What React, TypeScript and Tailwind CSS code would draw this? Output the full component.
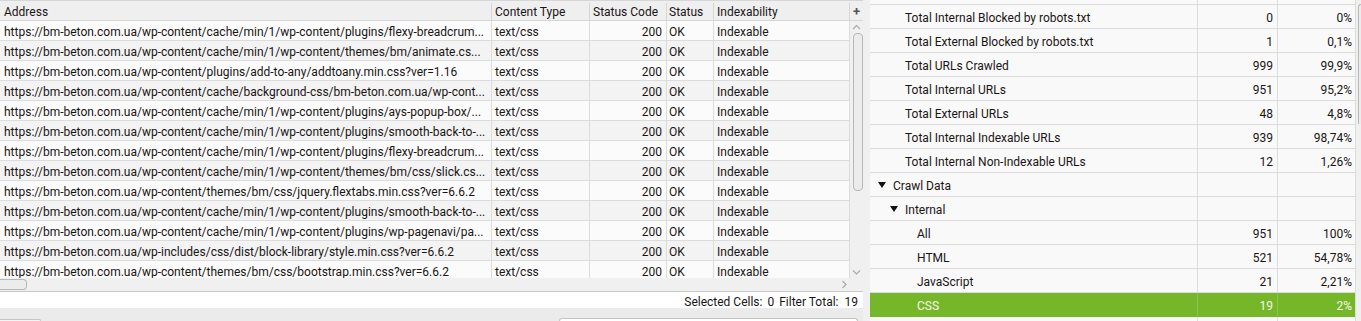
import React from "react";

// Crawl results table (left) + overview tree (right)

interface UrlRow {
  address: string;
  type: string;
  code: number;
  status: string;
  index: string;
}

const urls: string[] = [
  "https://bm-beton.com.ua/wp-content/cache/min/1/wp-content/plugins/flexy-breadcrum...",
  "https://bm-beton.com.ua/wp-content/cache/min/1/wp-content/themes/bm/animate.cs...",
  "https://bm-beton.com.ua/wp-content/plugins/add-to-any/addtoany.min.css?ver=1.16",
  "https://bm-beton.com.ua/wp-content/cache/background-css/bm-beton.com.ua/wp-cont...",
  "https://bm-beton.com.ua/wp-content/cache/min/1/wp-content/plugins/ays-popup-box/...",
  "https://bm-beton.com.ua/wp-content/cache/min/1/wp-content/plugins/smooth-back-to-...",
  "https://bm-beton.com.ua/wp-content/cache/min/1/wp-content/plugins/flexy-breadcrum...",
  "https://bm-beton.com.ua/wp-content/cache/min/1/wp-content/themes/bm/css/slick.cs...",
  "https://bm-beton.com.ua/wp-content/themes/bm/css/jquery.flextabs.min.css?ver=6.6.2",
  "https://bm-beton.com.ua/wp-content/cache/min/1/wp-content/plugins/smooth-back-to-...",
  "https://bm-beton.com.ua/wp-content/cache/min/1/wp-content/plugins/wp-pagenavi/pa...",
  "https://bm-beton.com.ua/wp-includes/css/dist/block-library/style.min.css?ver=6.6.2",
  "https://bm-beton.com.ua/wp-content/themes/bm/css/bootstrap.min.css?ver=6.6.2",
];

const rows: UrlRow[] = urls.map((address) => ({
  address,
  type: "text/css",
  code: 200,
  status: "OK",
  index: "Indexable",
}));

interface TreeRow {
  label: string;
  level: number;
  expanded?: boolean;
  count?: string;
  pct?: string;
  active?: boolean;
}

const tree: TreeRow[] = [
  { label: "Total Internal Blocked by robots.txt", level: 1, count: "0", pct: "0%" },
  { label: "Total External Blocked by robots.txt", level: 1, count: "1", pct: "0,1%" },
  { label: "Total URLs Crawled", level: 1, count: "999", pct: "99,9%" },
  { label: "Total Internal URLs", level: 1, count: "951", pct: "95,2%" },
  { label: "Total External URLs", level: 1, count: "48", pct: "4,8%" },
  { label: "Total Internal Indexable URLs", level: 1, count: "939", pct: "98,74%" },
  { label: "Total Internal Non-Indexable URLs", level: 1, count: "12", pct: "1,26%" },
  { label: "Crawl Data", level: 0, expanded: true },
  { label: "Internal", level: 1, expanded: true },
  { label: "All", level: 2, count: "951", pct: "100%" },
  { label: "HTML", level: 2, count: "521", pct: "54,78%" },
  { label: "JavaScript", level: 2, count: "21", pct: "2,21%" },
  { label: "CSS", level: 2, count: "19", pct: "2%", active: true },
];

function Chevron({ dir }: { dir: "up" | "down" | "right" }) {
  const d =
    dir === "up" ? "M1 5 L4.5 1.5 L8 5" : dir === "down" ? "M1 1.5 L4.5 5 L8 1.5" : "M1.5 1 L5 4.5 L1.5 8";
  const size = dir === "right" ? "w-[7px] h-[9px]" : "w-[9px] h-[7px]";
  return (
    <svg className={size} viewBox={dir === "right" ? "0 0 7 9" : "0 0 9 7"} fill="none">
      <path d={d} stroke="#a8a8a8" strokeWidth="1.1" />
    </svg>
  );
}

function Triangle() {
  return (
    <svg className="w-[8px] h-[6px]" viewBox="0 0 8 6">
      <path d="M0 0 H8 L4 6 Z" fill="#111" />
    </svg>
  );
}

export default function App() {
  return (
    <div className="flex w-[1361px] h-[321px] overflow-hidden bg-[#f0f0f0] font-['Roboto',sans-serif] text-[12px] text-[#1a1515]">
      {/* Left: results grid */}
      <div className="flex flex-col w-[863px] shrink-0">
        {/* Header */}
        <div className="flex h-[21px] pt-[2px] border-t border-b border-[#d6d6d6] bg-[#efefef]">
          <div className="w-[492px] pl-[4px] border-r border-[#d6d6d6] flex items-center">Address</div>
          <div className="w-[98px] pl-[3px] border-r border-[#d6d6d6] flex items-center">Content Type</div>
          <div className="w-[77px] pl-[3px] border-r border-[#d6d6d6] flex items-center">Status Code</div>
          <div className="w-[47px] pl-[2px] border-r border-[#d6d6d6] flex items-center">Status</div>
          <div className="w-[136px] pl-[3px] border-r border-[#d6d6d6] flex items-center">Indexability</div>
          <div className="w-[13px] flex items-center justify-center text-[#555] font-bold text-[13px] leading-none">+</div>
        </div>

        {/* Body + vertical scrollbar */}
        <div className="flex h-[257px] overflow-hidden">
          <div className="w-[850px] shrink-0">
            {rows.map((r, i) => (
              <div
                key={i}
                className={`flex h-[20px] pt-[2px] border-b border-[#dcdcdc] ${i % 2 === 1 ? "bg-[#f3f3f3]" : "bg-[#fbfbfb]"}`}
              >
                <div className="w-[492px] -mt-[2px] pt-[2px] pl-[4px] border-r border-[#dcdcdc] flex items-center whitespace-nowrap overflow-hidden">
                  {r.address}
                </div>
                <div className="w-[98px] -mt-[2px] pt-[2px] pl-[3px] border-r border-[#dcdcdc] flex items-center">{r.type}</div>
                <div className="w-[77px] -mt-[2px] pt-[2px] pr-[4px] border-r border-[#dcdcdc] flex items-center justify-end">{r.code}</div>
                <div className="w-[47px] -mt-[2px] pt-[2px] pl-[2px] border-r border-[#dcdcdc] flex items-center">{r.status}</div>
                <div className="w-[136px] -mt-[2px] pt-[2px] pl-[3px] border-r border-[#dcdcdc] flex items-center">{r.index}</div>
              </div>
            ))}
          </div>
          <div className="w-[13px] flex flex-col items-center bg-[#f0f0f0]">
            <div className="mt-[2px] h-[9px] flex items-center">
              <Chevron dir="up" />
            </div>
            <div className="mt-[1px] ml-[2px] w-[10px] h-[158px] rounded-[4px] border border-[#b8b8b8] bg-[#ececec]" />
            <div className="mt-auto mb-[1px] h-[9px] flex items-center">
              <Chevron dir="down" />
            </div>
          </div>
        </div>

        {/* Horizontal scrollbar */}
        <div className="flex h-[14px] border-b border-[#c8c8c8] bg-[#f0f0f0]">
          <div className="w-[850px] flex items-center">
            <div className="w-[27px] h-[11px] rounded-r-[4px] border border-l-0 border-[#b8b8b8] bg-[#ececec]" />
            <div className="ml-auto mr-[2px] flex items-center">
              <Chevron dir="right" />
            </div>
          </div>
        </div>

        {/* Status bar */}
        <div className="h-[16px] pt-[3px] bg-white flex items-center justify-end pr-[5px] whitespace-nowrap">
          <span>Selected Cells:</span>
          <span className="ml-[5px]">0</span>
          <span className="ml-[5px]">Filter Total:</span>
          <span className="ml-[6px]">19</span>
        </div>

        {/* Lower pane edge */}
        <div className="flex-1 bg-[#ebebeb] flex items-end">
          <div className="w-[41px] h-[2px] border-t border-r border-[#c4c4c4] rounded-tr-[3px] bg-[#f4f4f4]" />
          <div className="ml-[518px] w-[299px] h-[3px] border-t border-l border-r border-[#c4c4c4] rounded-t-[3px] bg-white" />
        </div>
      </div>

      {/* Splitter */}
      <div className="w-[7px] shrink-0 bg-[#f0f0f0]" />

      {/* Right: overview tree */}
      <div className="flex w-[491px] shrink-0">
        <div className="w-[485px] flex flex-col bg-[#f9f9f9] overflow-hidden">
          <div className="flex h-[5px] shrink-0 border-b border-[#dcdcdc]">
            <div className="w-[328px] border-r border-[#dcdcdc]" />
            <div className="w-[80px] border-r border-[#dcdcdc]" />
            <div className="w-[77px]" />
          </div>
          {tree.map((t, i) => (
            <div
              key={i}
              className={`flex h-[24px] shrink-0 border-b ${
                t.active ? "bg-[#76b72a] text-[#f2f9ea] border-[#76b72a]" : "border-[#dcdcdc]"
              }`}
            >
              <div
                className={`w-[328px] pt-[2px] flex items-center border-r ${t.active ? "border-[#8fc556]" : "border-[#dcdcdc]"}`}
                style={{ paddingLeft: t.expanded ? 8 + t.level * 12 : 35 + (t.level - 1) * 12 }}
              >
                {t.expanded && (
                  <span className="mr-[7px] -mt-[2px] flex items-center">
                    <Triangle />
                  </span>
                )}
                <span>{t.label}</span>
              </div>
              <div
                className={`w-[80px] pt-[2px] flex items-center justify-end pr-[4px] border-r ${
                  t.active ? "border-[#8fc556]" : "border-[#dcdcdc]"
                }`}
              >
                {t.count}
              </div>
              <div className="w-[77px] pt-[2px] flex items-center justify-end pr-[3px]">{t.pct}</div>
            </div>
          ))}
          <div className="flex flex-1">
            <div className="w-[328px] border-r border-[#dcdcdc]" />
            <div className="w-[80px] border-r border-[#dcdcdc]" />
            <div className="w-[77px]" />
          </div>
        </div>
        <div className="flex-1 bg-[#f0f0f0] border-l border-[#dcdcdc] pt-[4px] pl-[2px]">
          <div className="h-[120px] rounded-tl-[4px] border-t border-l border-[#b8b8b8] bg-[#ececec]" />
        </div>
      </div>
    </div>
  );
}
